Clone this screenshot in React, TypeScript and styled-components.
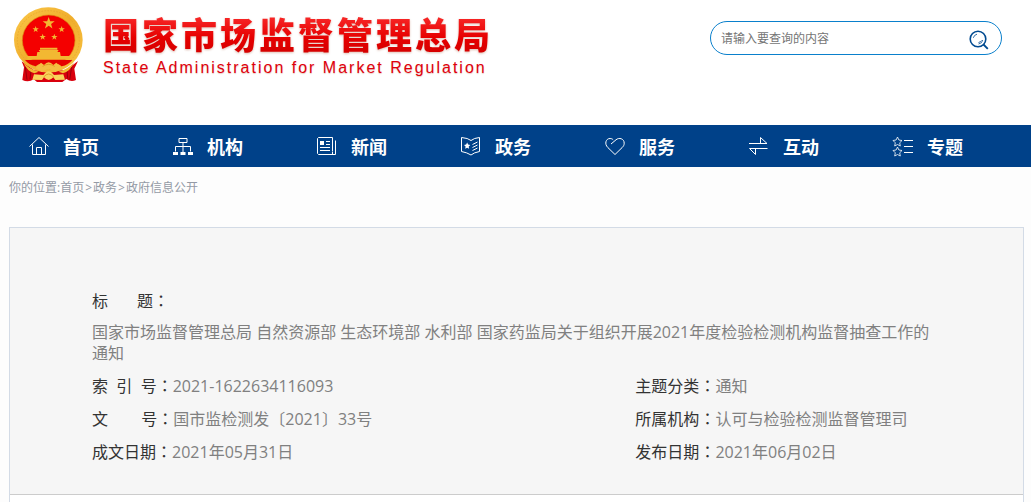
import React from "react";
import styled, { createGlobalStyle } from "styled-components";

const sans = '"Open Sans", "Noto Sans CJK SC", sans-serif';

const GlobalStyle = createGlobalStyle`
  * { box-sizing: border-box; }
  html { min-height: 100%; background: #fdfdfd; }
  body { margin: 0; font-family: ${sans}; font-size: 16px; line-height: 21px; color: #333; overflow-x: hidden; }
  a { color: inherit; text-decoration: none; }
`;

const Header = styled.header`
  display: flex;
  justify-content: space-between;
  align-items: flex-start;
  height: 125px;
  padding: 2px 29px 0 5px;
  background: #fff;
`;

const Brand = styled.a`
  display: flex;
  gap: 8px;
`;

const BrandText = styled.div`
  padding-top: 7px;
`;

const BrandName = styled.h1`
  margin: 0;
  font: 900 36px/48px "Noto Sans CJK SC", sans-serif;
  letter-spacing: 3px;
  white-space: nowrap;
  color: transparent;
  background: linear-gradient(#f62424 20%, #e60000 60%, #d60000 90%);
  background-clip: text;
  -webkit-background-clip: text;
  filter: drop-shadow(0 1px 1px rgba(170, 90, 60, 0.4));
`;

const BrandLatin = styled.p`
  margin: 0;
  font: 16px/22px "Liberation Sans", sans-serif;
  letter-spacing: 2px;
  white-space: nowrap;
  color: #e0000c;
  text-shadow: 0 1px 1px rgba(170, 90, 60, 0.3);
`;

const Search = styled.form`
  display: flex;
  align-items: center;
  width: 292px;
  height: 34px;
  margin-top: 19px;
  padding: 0 12px 0 10px;
  border: 1px solid #0a80cc;
  border-radius: 17px;
`;

const SearchInput = styled.input`
  flex: 1;
  min-width: 0;
  padding: 2px 0 0;
  border: 0;
  outline: 0;
  background: none;
  font: 12px/18px ${sans};
  color: #333;
  &::placeholder { color: #757575; opacity: 1; }
`;

const SearchButton = styled.button`
  display: flex;
  padding: 3px 0 0;
  border: 0;
  background: none;
  color: #004a90;
  cursor: pointer;
`;

const Nav = styled.nav`
  display: flex;
  height: 42px;
  padding-left: 29px;
  background: #004189;
  color: #fff;
`;

const NavLink = styled.a`
  display: flex;
  flex: 0 0 144px;
  align-items: center;
  gap: 14px;
  font-size: 18px;
  font-weight: 700;
  line-height: 24px;
  svg { flex: none; overflow: visible; }
`;

const NavText = styled.span`
  padding-top: 2px;
`;

const Crumbs = styled.nav`
  padding: 12px 9px 0;
  font-size: 12px;
  line-height: 18px;
  color: #949aa5;
`;

const Separator = styled.span`
  padding: 0 1px;
`;

const Article = styled.main`
  min-height: 276px;
  margin: 30px 7px 0 9px;
  border: 1px solid #d3dbe6;
  border-bottom: 0;
  background: #fff;
`;

const Info = styled.dl`
  display: flex;
  flex-wrap: wrap;
  row-gap: 12px;
  margin: 0;
  padding: 63px 82px 31px;
  border-bottom: 1px solid #ccc;
  background: #f6f6f6;
`;

const Field = styled.div<{ $size: "full" | "wide" | "narrow" }>`
  display: ${(p) => (p.$size === "full" ? "block" : "flex")};
  width: ${(p) => ({ full: "100%", wide: "64%", narrow: "36%" })[p.$size]};
`;

const Label = styled.dt`
  flex: none;
  height: 21px;
  white-space: pre;
`;

const Colon = styled.span`
  font-family: "Noto Sans CJK TC", sans-serif;
  line-height: 16px;
`;

const Value = styled.dd<{ $below?: boolean }>`
  margin: ${(p) => (p.$below ? "10px 0 0" : "0")};
  color: #808080;
`;

function Emblem() {
  const star = "M0-10 2.4-3.2 9.5-3.1 3.8 1.2 5.9 8.1 0 4-5.9 8.1-3.8 1.2-9.5-3.1-2.4-3.2Z";
  return (
    <svg width="90" height="86" viewBox="0 0 270 258" aria-hidden="true">
      <defs>
        <linearGradient id="gold" x1="0" y1="0" x2="1" y2="1">
          <stop offset="0" stopColor="#fbc84a" />
          <stop offset=".5" stopColor="#f0ae2c" />
          <stop offset="1" stopColor="#f8c343" />
        </linearGradient>
      </defs>
      <path d="M50 178 57 196 52 234Q70 243 86 232L96 240H172L184 231Q198 241 213 234L208 200 219 177 183 205H88Z" fill="#d9000d" />
      <path d="M61 195 66 233M78 205 75 232M200 195 194 233M186 205 188 230" stroke="#98000b" strokeWidth="3" fill="none" />
      <ellipse cx="130" cy="114" rx="103" ry="98" fill="url(#gold)" />
      <ellipse cx="130" cy="114" rx="93" ry="88" fill="none" stroke="#e5a32a" strokeWidth="2" strokeDasharray="5 4" />
      <ellipse cx="131" cy="115" rx="79" ry="76" fill="#f40000" stroke="#d98b14" strokeWidth="2" />
      <g fill="#f2b832">
        <path d={star} transform="translate(131 64) scale(1.9)" />
        <path d={star} transform="translate(92 82)" />
        <path d={star} transform="translate(170 82)" />
        <path d={star} transform="translate(113 105)" />
        <path d={star} transform="translate(148 105)" />
        <path d="M105 137H157V143H105ZM101 144H161L157 150H105ZM97 150H165L167 162H195V173H67V162H95Z" />
        <path d="M60 174H202Q190 189 170 193L154 182 145 188 131 178 117 188 108 182 92 193Q71 188 60 174Z" fill="#e60000" />
        <path d="M55 181Q75 204 101 209L88 214Q66 208 55 181ZM207 181Q187 204 161 209L174 214Q196 208 207 181Z" />
        <path d="M92 198 108 182 117 189Q131 172 145 189L154 182 170 198 151 210Q131 194 111 210Z" fill="#f4bd42" />
        <path d="M87 217 115 219Q131 196 147 219L175 217 180 233 151 234 145 226Q131 242 117 226L111 234 82 233Z" fill="#f9d35b" />
      </g>
      <path d="M113 193Q131 181 149 193M116 225Q131 207 146 225" fill="none" stroke="#d18a16" strokeWidth="2" />
    </svg>
  );
}

const starSmall = "M4.5 0 5.9 3 9 3.5 6.7 5.8 7.3 9 4.5 7.5 1.7 9 2.3 5.8 0 3.5 3.1 3Z";

const icons: Record<string, React.ReactNode> = {
  home: <path d="M.5 10.5 10 1.5 19.5 10.5M3.5 8.5V18.5H16.5V8.5M7.5 18.5V11.5H12.5V18.5" />,
  org: (
    <>
      <path d="M6 2.5H14V6.5H6ZM10 6.5V16M2.5 15.5V10.5H17.5V15.5" />
      <path d="M0 16H5V19H0ZM7.5 16H12.5V19H7.5ZM15 16H20V19H15Z" fill="currentColor" stroke="none" />
    </>
  ),
  news: (
    <>
      <path d="M1.5 1.5H15.5V15.5M18.5 4.5V18.5H1.5L.5 17.5V2.5L1.5 1.5M9 5.5H13M9 8.5H13M3 11.5H13M3 14.5H13M15.5 16V18" />
      <path d="M3 5H7V9H3Z" fill="currentColor" stroke="none" />
    </>
  ),
  gov: (
    <>
      <path d="M.5 1.5Q7 2 10 4.5 13 2 18.5 1.5V15.5Q13 16.5 10 19 6 16.5.5 15.5ZM11.5 8.5 16.5 6M11.5 11.5 16.5 9M11.5 14.5 16.5 12" />
      <path d={starSmall} transform="translate(3 6.5) scale(.7)" fill="currentColor" stroke="none" />
    </>
  ),
  heart: <path d="M6 8 11 3.8C14 1.2 19.2 2.5 19.2 7.2 19.2 9 18.5 10.2 17.2 11.5L10 18.5 2.8 11.5C-.8 8 .8 2.5 5 2.5 6.2 2.5 7.2 2.8 8.2 3.8" />,
  exchange: <path d="M0 7.5H18L11.5 1.5V7.5M18.5 12.5H.5L6.5 18.5V13" />,
  topics: (
    <>
      <path d={starSmall} transform="translate(0 1)" strokeWidth=".8" />
      <path d={starSmall} transform="translate(0 11)" strokeWidth=".8" />
      <path d="M11 4.5H20M11 10.5H20M11 16.5H20" />
    </>
  ),
};

const navItems = [
  ["home", "首页"],
  ["org", "机构"],
  ["news", "新闻"],
  ["gov", "政务"],
  ["heart", "服务"],
  ["exchange", "互动"],
  ["topics", "专题"],
];

const title =
  "国家市场监督管理总局 自然资源部 生态环境部 水利部 国家药监局关于组织开展2021年度检验检测机构监督抽查工作的通知";

const fields: { label: string; value: string; size: "full" | "wide" | "narrow" }[] = [
  { label: "标" + "\u00a0".repeat(7) + "题", value: title, size: "full" },
  { label: "索\u00a0\u00a0引\u00a0\u00a0号", value: "2021-1622634116093", size: "wide" },
  { label: "主题分类", value: "通知", size: "narrow" },
  { label: "文" + "\u00a0".repeat(8) + "号", value: "国市监检测发〔2021〕33号", size: "wide" },
  { label: "所属机构", value: "认可与检验检测监督管理司", size: "narrow" },
  { label: "成文日期", value: "2021年05月31日", size: "wide" },
  { label: "发布日期", value: "2021年06月02日", size: "narrow" },
];

export default function App() {
  return (
    <div>
      <GlobalStyle />
      <Header>
        <Brand href="#">
          <Emblem />
          <BrandText>
            <BrandName>国家市场监督管理总局</BrandName>
            <BrandLatin>State Administration for Market Regulation</BrandLatin>
          </BrandText>
        </Brand>
        <Search role="search">
          <SearchInput type="text" placeholder="请输入要查询的内容" aria-label="请输入要查询的内容" />
          <SearchButton type="button" aria-label="搜索">
            <svg width="20" height="20" viewBox="0 0 20 20" fill="none" stroke="currentColor">
              <circle cx="9" cy="9" r="7.8" strokeWidth="1.6" />
              <path d="M14.5 14.5 18.8 18.8" strokeWidth="1.8" />
              <path d="M4.3 7.8Q5.3 4.8 8 4.2M9.5 14Q13 13.5 13.8 10M9.5 12.5Q11.5 12 12.5 10.5" strokeWidth=".8" />
            </svg>
          </SearchButton>
        </Search>
      </Header>
      <Nav>
        {navItems.map(([icon, text]) => (
          <NavLink href="#" key={icon}>
            <svg width="20" height="20" viewBox="0 0 20 20" fill="none" stroke="currentColor" aria-hidden="true">
              {icons[icon]}
            </svg>
            <NavText>{text}</NavText>
          </NavLink>
        ))}
      </Nav>
      <Crumbs>
        你的位置:<a href="#">首页</a>
        <Separator>&gt;</Separator>
        <a href="#">政务</a>
        <Separator>&gt;</Separator>
        <a href="#">政府信息公开</a>
      </Crumbs>
      <Article>
        <Info>
          {fields.map((f) => (
            <Field key={f.label} $size={f.size}>
              <Label>
                {f.label}
                <Colon>：</Colon>
              </Label>
              <Value $below={f.size === "full"}>{f.value}</Value>
            </Field>
          ))}
        </Info>
      </Article>
    </div>
  );
}
